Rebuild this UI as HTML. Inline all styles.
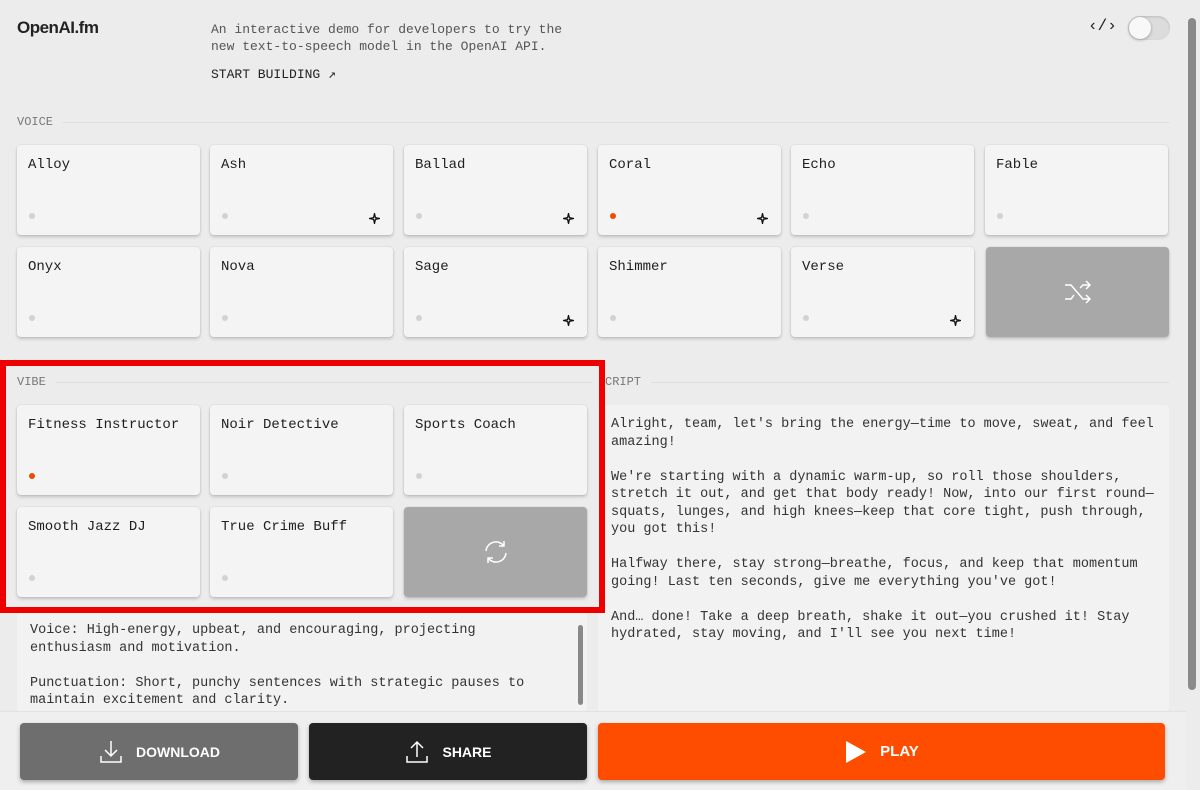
<!DOCTYPE html>
<html><head><meta charset="utf-8"><style>
*{box-sizing:border-box;margin:0;padding:0}
body{width:1200px;height:790px;overflow:hidden;background:#ececec;font-family:"Liberation Mono",monospace;color:#222;position:relative}
.logo{position:absolute;left:17px;top:18px;font:bold 17px "Liberation Sans",sans-serif;letter-spacing:-0.5px}
.desc{position:absolute;left:211px;top:21px;font-size:13px;line-height:17px;color:#555}
.sb{position:absolute;left:211px;top:67px;font-size:13px;color:#222}
.code{position:absolute;left:1088px;top:17px;font-size:16px}
.tog{position:absolute;left:1128px;top:16px;width:42px;height:24px;border-radius:12px;background:#dcdcdc;box-shadow:inset 0 1px 2px rgba(0,0,0,.15)}
.tog:after{content:"";position:absolute;left:1px;top:1px;width:22px;height:22px;border-radius:50%;background:#f8f8f8;box-shadow:0 1px 3px rgba(0,0,0,.3)}
.lbl{position:absolute;font-size:12px;color:#777;display:flex;align-items:center}
.lbl span{margin-right:10px}
.lbl i{flex:1;height:1px;background:#ddd}
.card{position:absolute;width:183px;height:90px;background:#f4f4f4;border-radius:4px;box-shadow:0 2px 3px rgba(0,0,0,.18),0 0 0 1px rgba(0,0,0,.03);font-size:14px;padding:12px 11px;color:#1e1e1e}
.card .d{position:absolute;left:12px;bottom:16px;width:6px;height:6px;border-radius:50%;background:#d2d2d2}
.card .d.o{background:#f04a00}
.card .s{position:absolute;right:13px;bottom:11px;width:11px;height:11px}
.gray{background:#a8a8a8;display:flex;align-items:center;justify-content:center}
.red{position:absolute;left:0;top:360px;width:605px;height:253px;border:6px solid #ee0000}
.ta{position:absolute;background:#f2f2f2;font-size:13.5px;line-height:17.5px;color:#333;border-radius:4px}
.btn{position:absolute;top:723px;height:57px;border-radius:4px;display:flex;align-items:center;justify-content:center;font:bold 14px "Liberation Sans",sans-serif;color:#fff;box-shadow:0 2px 4px rgba(0,0,0,.3)}
.btn svg{margin-right:12px}
</style></head><body>
<svg width="0" height="0" style="position:absolute"><defs><symbol id="sp" viewBox="0 0 12 12"><path d="M6 0.5L7 5 11.5 6 7 7 6 11.5 5 7 0.5 6 5 5z" fill="none" stroke="#111" stroke-width="1.4" stroke-linejoin="round"/></symbol></defs></svg>
<div class="logo">OpenAI.fm</div>
<div class="desc">An interactive demo for developers to try the<br>new text-to-speech model in the OpenAI API.</div>
<div class="sb">START BUILDING ↗</div>
<div class="code">‹/›</div>
<div class="tog"></div>
<div class="lbl" style="left:17px;top:115px;width:1152px"><span>VOICE</span><i></i></div>

<div class="card" style="left:17px;top:145px">Alloy<div class="d"></div></div>
<div class="card" style="left:210px;top:145px">Ash<div class="d"></div><svg class="s"><use href="#sp"/></svg></div>
<div class="card" style="left:404px;top:145px">Ballad<div class="d"></div><svg class="s"><use href="#sp"/></svg></div>
<div class="card" style="left:598px;top:145px">Coral<div class="d o"></div><svg class="s"><use href="#sp"/></svg></div>
<div class="card" style="left:791px;top:145px">Echo<div class="d"></div></div>
<div class="card" style="left:985px;top:145px">Fable<div class="d"></div></div>
<div class="card" style="left:17px;top:247px">Onyx<div class="d"></div></div>
<div class="card" style="left:210px;top:247px">Nova<div class="d"></div></div>
<div class="card" style="left:404px;top:247px">Sage<div class="d"></div><svg class="s"><use href="#sp"/></svg></div>
<div class="card" style="left:598px;top:247px">Shimmer<div class="d"></div></div>
<div class="card" style="left:791px;top:247px">Verse<div class="d"></div><svg class="s"><use href="#sp"/></svg></div>
<div class="card gray" style="left:986px;top:247px"><svg width="30" height="26" viewBox="0 0 30 26" fill="none" stroke="#fff" stroke-width="1.5"><path d="M2 6h6l12 14h7M2 20h6l3-4M17 9l3-3h7M23 2l4 4-4 4M23 16l4 4-4 4"/></svg></div>

<div class="lbl" style="left:17px;top:375px;width:575px"><span>VIBE</span><i></i></div>
<div class="lbl" style="left:605px;top:375px;width:564px"><span>CRIPT</span><i></i></div>
<div class="card" style="left:17px;top:405px">Fitness Instructor<div class="d o"></div></div>
<div class="card" style="left:210px;top:405px">Noir Detective<div class="d"></div></div>
<div class="card" style="left:404px;top:405px">Sports Coach<div class="d"></div></div>
<div class="card" style="left:17px;top:507px">Smooth Jazz DJ<div class="d"></div></div>
<div class="card" style="left:210px;top:507px">True Crime Buff<div class="d"></div></div>
<div class="card gray" style="left:404px;top:507px"><svg width="28" height="28" viewBox="0 0 28 28" fill="none" stroke="#fff" stroke-width="1.5"><path d="M4 13a10 10 0 0 1 18-5M24 15a10 10 0 0 1-18 5M22 3v5h-5M6 25v-5h5"/></svg></div>

<div class="ta" style="left:17px;top:612px;width:570px;height:100px;padding:10px 13px">Voice: High-energy, upbeat, and encouraging, projecting<br>enthusiasm and motivation.<br><br>Punctuation: Short, punchy sentences with strategic pauses to<br>maintain excitement and clarity.</div>
<div style="position:absolute;left:578px;top:625px;width:5px;height:80px;background:#888;border-radius:3px"></div>
<div class="ta" style="left:598px;top:405px;width:571px;height:307px;padding:11px 13px">Alright, team, let's bring the energy—time to move, sweat, and feel amazing!<br><br>We're starting with a dynamic warm-up, so roll those shoulders, stretch it out, and get that body ready! Now, into our first round—squats, lunges, and high knees—keep that core tight, push through, you got this!<br><br>Halfway there, stay strong—breathe, focus, and keep that momentum going! Last ten seconds, give me everything you've got!<br><br>And… done! Take a deep breath, shake it out—you crushed it! Stay hydrated, stay moving, and I'll see you next time!</div>
<div class="red"></div>
<div style="position:absolute;left:0;top:711px;width:1186px;height:79px;background:#efefef;border-top:1px solid #e2e2e2"></div>
<div style="position:absolute;left:1188px;top:18px;width:8px;height:672px;background:#8a8a8a;border-radius:4px"></div>
<div class="btn" style="left:20px;width:278px;background:#6e6e6e"><svg width="26" height="26" viewBox="0 0 26 26" fill="none" stroke="#fff" stroke-width="1.5"><path d="M13 2v15M7 11l6 6 6-6M3 17v6h20v-6"/></svg>DOWNLOAD</div>
<div class="btn" style="left:309px;width:278px;background:#222"><svg width="26" height="26" viewBox="0 0 26 26" fill="none" stroke="#fff" stroke-width="1.5"><path d="M13 18V3M7 9l6-6 6 6M3 17v6h20v-6"/></svg>SHARE</div>
<div class="btn" style="left:598px;width:567px;background:#ff4d00;font-size:15px"><svg width="24" height="24" viewBox="0 0 24 24"><path d="M2 1l20 11-20 11z" fill="#fff"/></svg>PLAY</div>
</body></html>
